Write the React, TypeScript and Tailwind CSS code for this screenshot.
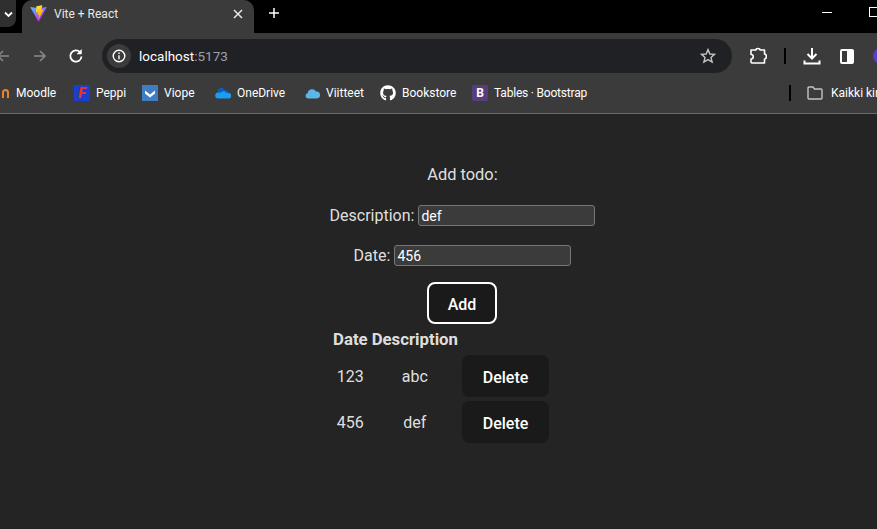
import React from "react";
import { FaGithub } from "react-icons/fa";

const ui = { fontFamily: 'Roboto,"Noto Sans",sans-serif' };

function Vite() {
  return (
    <svg width="17" height="17" viewBox="0 0 410 404" className="shrink-0">
      <defs>
        <linearGradient id="va" x1="6" y1="33" x2="235" y2="344" gradientUnits="userSpaceOnUse">
          <stop stopColor="#41D1FF" />
          <stop offset="1" stopColor="#BD34FE" />
        </linearGradient>
        <linearGradient id="vb" x1="194" y1="8" x2="236" y2="293" gradientUnits="userSpaceOnUse">
          <stop stopColor="#FFEA83" />
          <stop offset=".08" stopColor="#FFDD35" />
          <stop offset="1" stopColor="#FFA800" />
        </linearGradient>
      </defs>
      <path fill="url(#va)" d="M400 60 216 389c-4 7-14 7-18 0L11 60c-4-7 2-16 10-15l184 33h7l180-33c8-1 14 8 8 15Z" />
      <path fill="url(#vb)" d="M292 1 156 28c-2 0-4 2-4 5l-8 142c0 3 3 6 6 5l38-9c4-1 7 2 6 6l-11 55c-1 4 3 7 6 6l24-7c4-1 7 2 6 6l-18 88c-1 6 7 9 10 4l2-3 108-216c2-4-1-8-5-7l-38 7c-4 1-7-3-6-6l25-87c1-4-2-7-6-6Z" />
    </svg>
  );
}

function Bookmark({ icon, label, width, text = "" }: { icon: React.ReactNode; label: string; width: string; text?: string }) {
  return (
    <div className={`flex shrink-0 items-center gap-[6px] ${width}`}>
      <div className="flex w-[16px] shrink-0 justify-center">{icon}</div>
      <span className={`whitespace-nowrap text-[12px] text-white ${text}`}>{label}</span>
    </div>
  );
}

function Row({ date, desc }: { date: string; desc: string }) {
  return (
    <tr>
      <td className="px-px pb-0 pt-[2px] text-center align-middle">{date}</td>
      <td className="px-px pb-0 pt-[2px] text-center align-middle">{desc}</td>
      <td className="p-px">
        <button className="h-[42px] w-[87px] rounded-lg bg-[#1a1a1a] pt-[4px] font-medium text-white">Delete</button>
      </td>
    </tr>
  );
}

function Field({ label, value }: { label: string; value: string }) {
  return (
    <div className="flex h-[21px] items-center justify-center gap-[4px]">
      <label>{label}</label>
      <input
        readOnly
        value={value}
        className="h-[21px] w-[177px] rounded-[3px] border border-[#767676] bg-[#3b3b3b] px-[2px] text-[14px] text-white outline-none"
      />
    </div>
  );
}

export default function App() {
  return (
    <div style={ui} className="flex h-[529px] w-[877px] flex-col overflow-hidden bg-[#242424]">
      <div className="shrink-0">
        {/* tab strip */}
        <div className="flex h-[33px] bg-black">
          <div className="flex h-[27px] w-[16px] shrink-0 items-center justify-end rounded-br-[8px] bg-[#2f2f2f] pr-[2px]">
            <svg width="10" height="10" viewBox="0 0 10 10" fill="none" stroke="white" strokeWidth="1.800">
              <path d="M1 3.500 4.500 7 8 3.500" />
            </svg>
          </div>
          <div className="ml-[6px] flex h-[33px] w-[232px] shrink-0 items-center rounded-t-[10px] bg-[#3b3b3b] pb-[6px] pl-[8px] pr-[11px]">
            <Vite />
            <span className="ml-[7px] flex-1 text-[12px] text-[#e8e8e8]">Vite + React</span>
            <svg width="10" height="10" viewBox="0 0 10 10" stroke="#e8e8e8" strokeWidth="1.500">
              <path d="M1 1 9 9M9 1 1 9" />
            </svg>
          </div>
          <svg className="ml-[14px] mt-[7px] shrink-0" width="12" height="12" viewBox="0 0 12 12" stroke="white" strokeWidth="1.500">
            <path d="M6 1V11M1 6H11" />
          </svg>
          <div className="ml-[542px] mt-[12px] h-px w-[10px] shrink-0 bg-white" />
          <div className="ml-[37px] mt-[7px] h-[10px] w-[10px] shrink-0 border border-white" />
        </div>
        {/* toolbar */}
        <div className="flex h-[40px] items-center bg-[#3b3b3b] pt-[6px]">
          <svg className="ml-[-4px] shrink-0" width="14" height="14" viewBox="0 0 14 14" fill="none" stroke="#8a8a8a" strokeWidth="1.500">
            <path d="M13 7H2M7 2 2 7l5 5" />
          </svg>
          <svg className="ml-[23px] shrink-0" width="14" height="14" viewBox="0 0 14 14" fill="none" stroke="#8a8a8a" strokeWidth="1.500">
            <path d="M1 7H12M7 2l5 5-5 5" />
          </svg>
          <svg className="ml-[21px] shrink-0" width="16" height="16" viewBox="0 0 16 16" fill="none" stroke="white" strokeWidth="1.800">
            <path d="M13.500 8.500A5.600 5.600 0 1 1 12 4.200" />
            <path d="M13.500 1.500v4.500H9z" fill="white" strokeWidth="0.500" />
          </svg>
          <div className="ml-[18px] flex h-[34px] w-[630px] shrink-0 items-center rounded-[17px] bg-[#202124] pl-[5px] pr-[16px]">
            <div className="flex h-[24px] w-[24px] items-center justify-center rounded-full bg-[#3b3b3b]">
              <svg width="14" height="14" viewBox="0 0 14 14" fill="none" stroke="white" strokeWidth="1.400">
                <circle cx="7" cy="7" r="5.800" />
                <path d="M7 6.200v4M7 3.500v1.400" />
              </svg>
            </div>
            <span className="ml-[8px] flex-1 pt-px text-[13.5px]">
              <span className="text-white">localhost</span>
              <span className="text-[#9aa0a6]">:5173</span>
            </span>
            <svg width="16" height="16" viewBox="0 0 16 16" fill="none" stroke="#c4c4c4" strokeWidth="1.400">
              <path d="M8 1.600 9.900 6l4.600.4-3.500 3 1.100 4.600L8 11.600 3.900 14 5 9.400l-3.500-3L6.100 6z" />
            </svg>
          </div>
          <svg className="ml-[17px] shrink-0" width="18" height="18" viewBox="0 0 18 18" fill="none" stroke="white" strokeWidth="1.600" strokeLinejoin="round">
            <path d="M2 3h5c0-2 4-2 4 0h4.500v4c2.500 0 2.500 5 0 5v4H3c-1 0-1-.5-1-1v-3c3 0 3-4.500 0-4.500z" />
          </svg>
          <div className="ml-[17px] h-[16px] w-[2px] shrink-0 bg-black" />
          <svg className="ml-[17px] shrink-0" width="18" height="18" viewBox="0 0 18 18" fill="none" stroke="white" strokeWidth="2">
            <path d="M9 1v10M4.500 7 9 11.500 13.500 7M1.500 13.500v3h15v-3" />
          </svg>
          <div className="ml-[19px] flex h-[15px] w-[14px] shrink-0 rounded-[2px] border-2 border-white">
            <div className="w-1/2" />
            <div className="w-1/2 bg-white" />
          </div>
          <div className="ml-[19px] h-[16px] w-[16px] shrink-0 rounded-full bg-[#5b3cc4]" />
        </div>
        {/* bookmarks */}
        <div className="flex h-[41px] items-center overflow-hidden border-b border-[#6a6a6a] bg-[#3b3b3b]">
          <div className="flex w-[74px] shrink-0 items-center gap-[7px] pl-[2px]">
            <span className="h-[9px] w-[7px] rounded-t-[4px] border-x-2 border-t-2 border-[#e8832a]" />
            <span className="text-[12px] text-white">Moodle</span>
          </div>
          <Bookmark
            width="w-[68px]"
            label="Peppi"
            icon={
              <div className="flex h-[16px] w-[16px] items-center justify-center bg-[#1a3fd0] text-[14px] font-black italic leading-none text-[#e8321e]">
                F
              </div>
            }
          />
          <Bookmark
            width="w-[73px]"
            label="Viope"
            icon={
              <svg width="16" height="16" viewBox="0 0 16 16">
                <rect width="16" height="16" fill="#3f7cc4" />
                <path d="M3 5.500 8 9.500l5-4v3L8 12.500 3 8.500z" fill="white" />
              </svg>
            }
          />
          <Bookmark
            width="w-[89px]"
            label="OneDrive"
            icon={
              <svg width="16" height="12" viewBox="0 0 16 12">
                <path d="M3 6a3.500 3.500 0 0 1 6.500-3 3.200 3.200 0 0 1 4 3z" fill="#0b5cb8" />
                <path d="M3 11.500h10.500a2.400 2.400 0 0 0 0-5.500h-2a3.200 3.200 0 0 0-5.500-.5H3.500a3 3 0 0 0-.5 6z" fill="#1a9cf0" />
              </svg>
            }
          />
          <Bookmark
            width="w-[76px]"
            label="Viitteet"
            icon={
              <svg width="15" height="11" viewBox="0 0 15 11">
                <path d="M3 10.500a2.800 2.800 0 0 1-.3-5.500A4.500 4.500 0 0 1 11 3.500a3.500 3.500 0 0 1 1 7z" fill="#5db5e8" />
              </svg>
            }
          />
          <Bookmark width="w-[92px]" label="Bookstore" icon={<FaGithub className="h-[16px] w-[16px] text-white" />} />
          <Bookmark
            width="w-[317px]"
            label="Tables · Bootstrap"
            text="tracking-[-0.2px]"
            icon={
              <div className="flex h-[16px] w-[16px] items-center justify-center rounded-[2px] bg-[#563d7c] text-[12px] font-bold leading-none text-white">
                B
              </div>
            }
          />
          <div className="h-[16px] w-[2px] shrink-0 bg-black" />
          <svg className="ml-[16px] shrink-0" width="16" height="14" viewBox="0 0 16 14" fill="none" stroke="#c4c4c4" strokeWidth="1.400">
            <path d="M1 2a1 1 0 0 1 1-1h4l1.500 2H14a1 1 0 0 1 1 1v8a1 1 0 0 1-1 1H2a1 1 0 0 1-1-1z" />
          </svg>
          <span className="ml-[8px] whitespace-nowrap text-[12px] text-white">Kaikki kirjanmerkit</span>
        </div>
      </div>

      {/* page */}
      <main className="flex-1 pl-[330px] pt-[48px] text-[16px] leading-[24px] text-white/[.87]">
        <div className="w-[265px]">
          <div className="flex flex-col gap-[19px] text-center">
            <p className="h-[24px] pt-px text-[16.4px]">Add todo:</p>
            <Field label="Description:" value="def" />
            <Field label="Date:" value="456" />
          </div>
          <div className="mt-[16px] flex justify-center">
            <button className="ml-[-1px] h-[42px] w-[70px] rounded-lg border-2 border-white bg-[#1a1a1a] pt-[4px] font-medium text-white">
              Add
            </button>
          </div>
        </div>
        <table className="border-separate border-spacing-[2px]">
          <thead>
            <tr>
              <th className="p-px text-[16.8px] font-bold">Date</th>
              <th className="p-px text-[16.8px] font-bold">Description</th>
            </tr>
          </thead>
          <tbody>
            <Row date="123" desc="abc" />
            <Row date="456" desc="def" />
          </tbody>
        </table>
      </main>
    </div>
  );
}
